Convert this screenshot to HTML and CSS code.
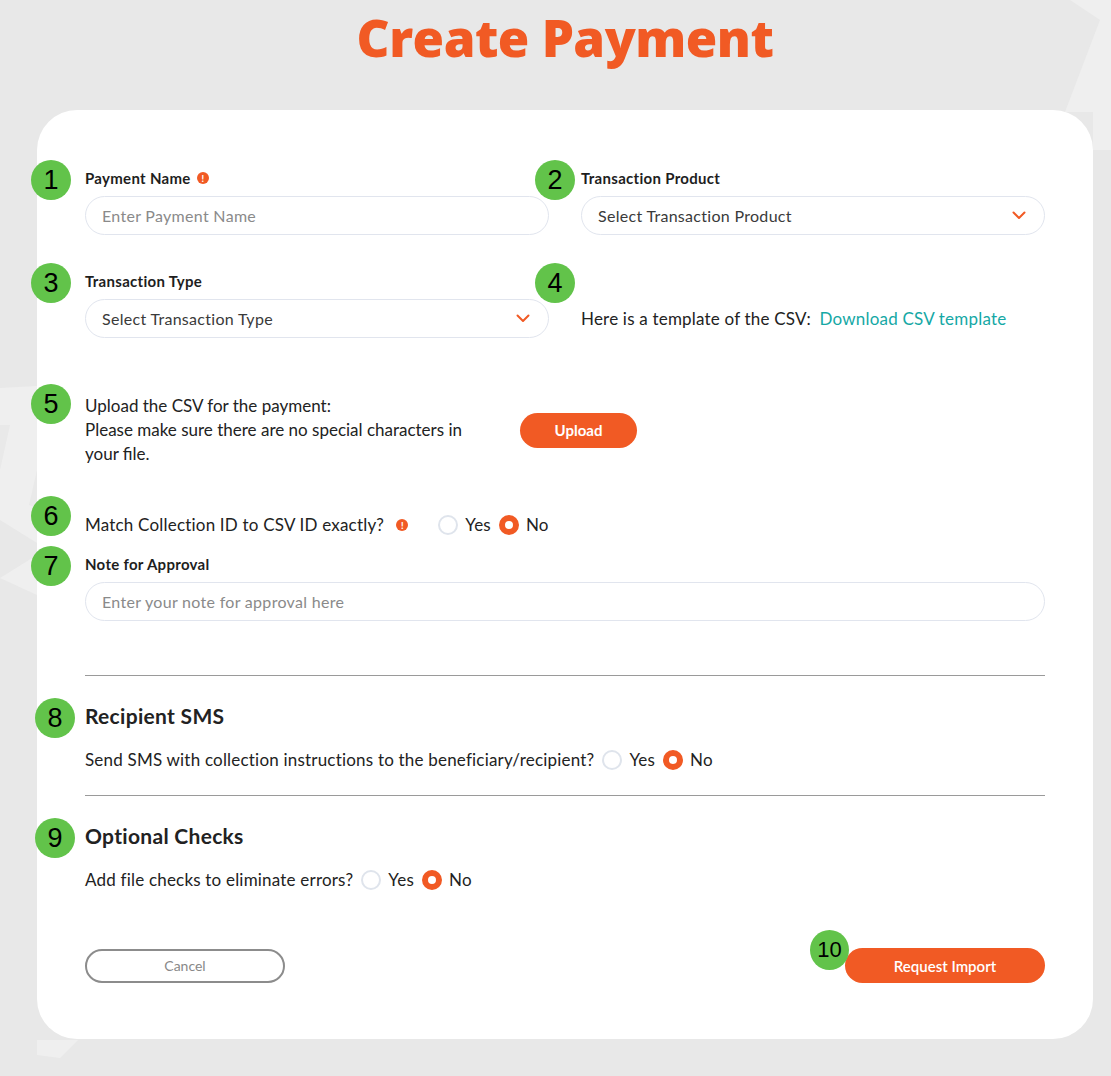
FILE: index.html
```html
<!DOCTYPE html>
<html lang="en">
<head>
  <meta charset="UTF-8">
  <meta name="viewport" content="width=device-width, initial-scale=1.0">
  <title>Create Payment</title>
  <link rel="stylesheet" href="styles.css">
</head>
<body>
  <svg class="fondo" width="1111" height="1076" viewBox="0 0 1111 1076" aria-hidden="true">
    <polygon points="1070,0 1111,0 1111,150 1093,150 1093,112 1065,112 1100,20" fill="#efefef"/>
    <polygon points="0,388 37,386 37,543 0,520" fill="#efefef"/>
    <polygon points="0,425 10,425 0,470" fill="#e9e9e9"/>
    <polygon points="37,470 29,505 37,508" fill="#e9e9e9"/>
    <polygon points="37,555 0,578 37,595" fill="#efefef"/>
    <polygon points="37,1040 78,1040 60,1058 37,1055" fill="#efefef"/>
  </svg>

  <div class="pagina">
    <h1 class="titulo">Create Payment</h1>

    <form class="tarjeta" onsubmit="return false">
      <div class="fila-doble">
        <div class="campo">
          <span class="marca">1</span>
          <label class="etiqueta">Payment Name <span class="info">!</span></label>
          <input class="caja" type="text" placeholder="Enter Payment Name">
        </div>
        <div class="campo">
          <span class="marca marca-der">2</span>
          <label class="etiqueta">Transaction Product</label>
          <div class="caja selector">
            <span>Select Transaction Product</span>
            <svg class="flecha" width="14" height="9" viewBox="0 0 14 9"><path d="M1.5 1.5 L7 7 L12.5 1.5" fill="none" stroke="#f15a24" stroke-width="2" stroke-linecap="round" stroke-linejoin="round"/></svg>
          </div>
        </div>
      </div>

      <div class="fila-doble fila-segunda">
        <div class="campo">
          <span class="marca">3</span>
          <label class="etiqueta">Transaction Type</label>
          <div class="caja selector">
            <span>Select Transaction Type</span>
            <svg class="flecha" width="14" height="9" viewBox="0 0 14 9"><path d="M1.5 1.5 L7 7 L12.5 1.5" fill="none" stroke="#f15a24" stroke-width="2" stroke-linecap="round" stroke-linejoin="round"/></svg>
          </div>
        </div>
        <div class="campo">
          <span class="marca marca-der">4</span>
          <div class="etiqueta"></div>
          <p class="plantilla">Here is a template of the CSV: <a href="#" class="enlace">Download CSV template</a></p>
        </div>
      </div>

      <div class="subida">
        <span class="marca">5</span>
        <p class="subida-texto">Upload the CSV for the payment:<br>Please make sure there are no special characters in your file.</p>
        <button type="button" class="boton-naranja boton-subir">Upload</button>
      </div>

      <div class="pregunta pregunta-match">
        <span class="marca marca-match">6</span>
        <span>Match Collection ID to CSV ID exactly?</span>
        <span class="info info-grande">!</span>
        <label class="opcion opcion-lejos"><input class="radio" type="radio" name="match"> Yes</label>
        <label class="opcion"><input class="radio" type="radio" name="match" checked> No</label>
      </div>

      <div class="campo campo-nota">
        <span class="marca">7</span>
        <label class="etiqueta">Note for Approval</label>
        <input class="caja" type="text" placeholder="Enter your note for approval here">
      </div>

      <hr class="linea">

      <div class="seccion">
        <span class="marca marca-seccion">8</span>
        <h2 class="seccion-titulo">Recipient SMS</h2>
        <div class="pregunta">
          <span>Send SMS with collection instructions to the beneficiary/recipient?</span>
          <label class="opcion"><input class="radio" type="radio" name="sms"> Yes</label>
          <label class="opcion"><input class="radio" type="radio" name="sms" checked> No</label>
        </div>
      </div>

      <hr class="linea linea-dos">

      <div class="seccion">
        <span class="marca marca-seccion">9</span>
        <h2 class="seccion-titulo">Optional Checks</h2>
        <div class="pregunta">
          <span>Add file checks to eliminate errors?</span>
          <label class="opcion"><input class="radio" type="radio" name="checks"> Yes</label>
          <label class="opcion"><input class="radio" type="radio" name="checks" checked> No</label>
        </div>
      </div>

      <div class="acciones">
        <button type="button" class="boton-cancelar">Cancel</button>
        <div class="importar">
          <span class="marca marca-diez">10</span>
          <button type="button" class="boton-naranja boton-importar">Request Import</button>
        </div>
      </div>
    </form>
  </div>
</body>
</html>
```

FILE: styles.css
```css
body {
  margin: 0;
  background: #e8e8e8;
  font-family: 'Lato', 'Liberation Sans', sans-serif;
  color: #222;
  position: relative;
  min-height: 1076px;
  overflow: hidden;
}

.fondo {
  position: absolute;
  top: 0;
  left: 0;
  z-index: 0;
}

.pagina {
  position: relative;
  z-index: 1;
  width: 1056px;
  margin-left: 37px;
}

.titulo {
  margin: 12px 0 47px;
  font-family: 'Open Sans', 'Lato', sans-serif;
  font-size: 51px;
  line-height: 51px;
  font-weight: 800;
  letter-spacing: -0.5px;
  color: #f15a24;
  text-align: center;
}

.tarjeta {
  background: #fff;
  border-radius: 40px;
  padding: 58px 48px 56px;
}

.fila-doble {
  display: grid;
  grid-template-columns: 1fr 1fr;
  column-gap: 32px;
}

.fila-segunda {
  margin-top: 36px;
}

.campo {
  position: relative;
  display: flex;
  flex-direction: column;
}

.etiqueta {
  display: flex;
  align-items: center;
  gap: 6px;
  height: 20px;
  font-size: 15px;
  font-weight: 700;
  letter-spacing: 0.3px;
  line-height: 20px;
  color: #1e1e1e;
  margin-bottom: 8px;
}

.caja {
  box-sizing: border-box;
  width: 100%;
  height: 39px;
  border: 1px solid #e1e5ee;
  border-radius: 20px;
  padding: 0 16px;
  font-family: inherit;
  font-size: 16px;
  letter-spacing: 0.3px;
  color: #3a3a3a;
  background: #fff;
  outline: none;
}

.caja::placeholder {
  color: #8a8a8a;
}

.selector {
  display: flex;
  align-items: center;
  justify-content: space-between;
}

.flecha {
  margin-right: 2px;
}

.plantilla {
  margin: 0;
  height: 39px;
  line-height: 39px;
  font-size: 17px;
  letter-spacing: 0.2px;
  color: #222;
}

.enlace {
  color: #15a8a5;
  text-decoration: none;
  margin-left: 4px;
}

.info {
  display: inline-flex;
  align-items: center;
  justify-content: center;
  width: 12px;
  height: 12px;
  border-radius: 50%;
  background: #f15a24;
  color: #fff;
  font-size: 9px;
  font-weight: 900;
  letter-spacing: 0;
  line-height: 1;
}

/* marcas verdes numeradas */
.marca {
  position: absolute;
  left: -54px;
  top: -8px;
  width: 40px;
  height: 40px;
  border-radius: 50%;
  background: #62c34a;
  color: #000;
  font-family: 'Liberation Sans', Arial, sans-serif;
  font-size: 27px;
  font-weight: 400;
  letter-spacing: 0;
  line-height: 40px;
  text-align: center;
}

.marca-der {
  left: -46px;
}

.subida {
  position: relative;
  display: flex;
  align-items: center;
  margin-top: 56px;
}

.subida .marca {
  top: -10px;
}

.subida-texto {
  margin: 0;
  width: 410px;
  font-size: 17px;
  line-height: 24px;
  color: #222;
}

.boton-naranja {
  border: none;
  background: #f15a24;
  color: #fff;
  font-family: inherit;
  font-weight: 700;
  cursor: pointer;
}

.boton-subir {
  margin-left: 25px;
  width: 117px;
  height: 35px;
  border-radius: 18px;
  font-size: 15px;
}

.pregunta {
  position: relative;
  display: flex;
  align-items: center;
  font-size: 17px;
  letter-spacing: 0.2px;
  line-height: 24px;
  color: #222;
}

.pregunta-match {
  margin-top: 47px;
}

.marca.marca-match {
  top: -17px;
}

.info-grande {
  margin-left: 12px;
}

.opcion {
  display: inline-flex;
  align-items: center;
  gap: 7px;
  margin-left: 8px;
}

.opcion-lejos {
  margin-left: 30px;
}

.radio {
  appearance: none;
  -webkit-appearance: none;
  box-sizing: border-box;
  width: 20px;
  height: 20px;
  margin: 0;
  border: 2px solid #dfe4ec;
  border-radius: 50%;
  background: #fff;
}

.radio:checked {
  border: 6px solid #f15a24;
}

.campo-nota {
  margin-top: 17px;
}

.linea {
  border: none;
  border-top: 1px solid #9a9a9a;
  margin: 54px 0 0;
}

.linea-dos {
  margin-top: 23px;
}

.seccion {
  position: relative;
  margin-top: 28px;
}

.marca.marca-seccion {
  left: -50px;
  top: -6px;
}

.seccion-titulo {
  margin: 0 0 20px;
  font-size: 21px;
  letter-spacing: 0.3px;
  line-height: 24px;
  font-weight: 700;
  color: #222;
}

.acciones {
  display: flex;
  justify-content: space-between;
  align-items: center;
  margin-top: 56px;
}

.boton-cancelar {
  box-sizing: border-box;
  width: 200px;
  height: 34px;
  border: 2px solid #8c8c8c;
  border-radius: 17px;
  background: #fff;
  color: #888;
  font-family: inherit;
  font-size: 14px;
}

.importar {
  position: relative;
}

.boton-importar {
  width: 200px;
  height: 35px;
  border-radius: 18px;
  font-size: 15px;
  font-weight: 600;
}

.marca.marca-diez {
  left: -35px;
  top: -18px;
  width: 39px;
  font-size: 22px;
}
```
